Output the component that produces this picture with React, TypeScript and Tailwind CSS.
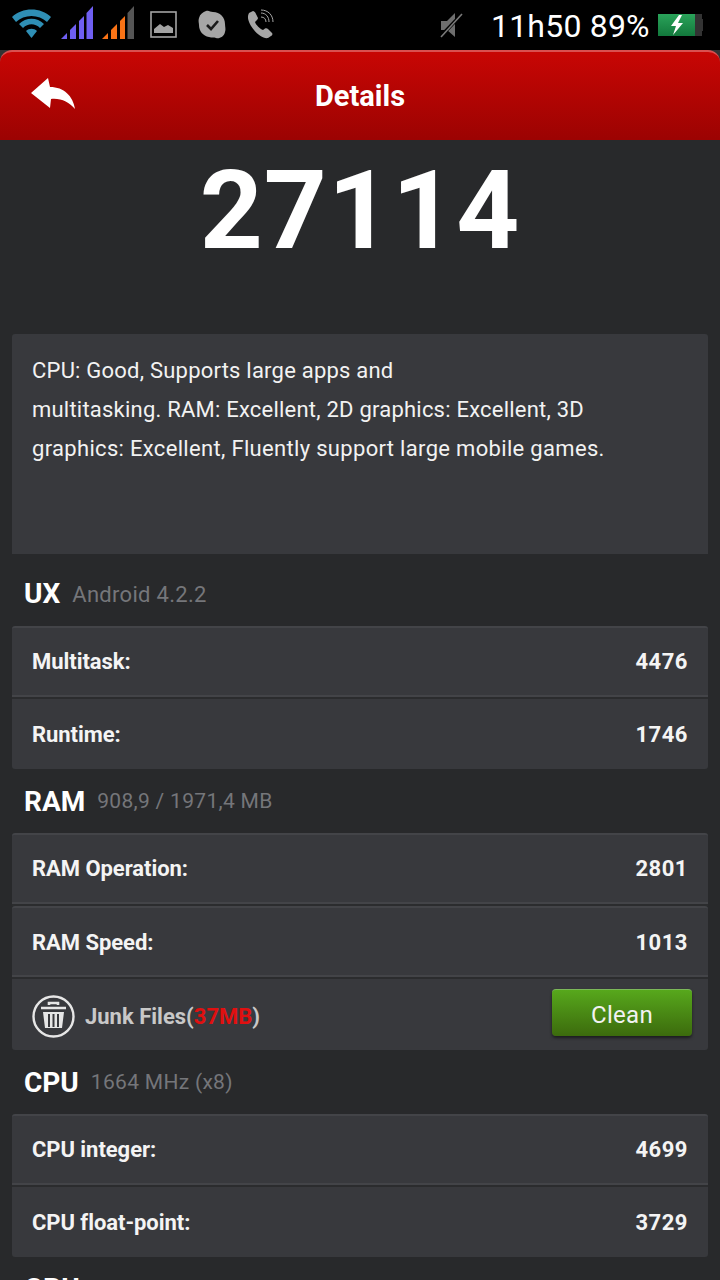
import React from 'react';

const FONT = "font-['Roboto',sans-serif]";

const WifiIcon = () => (
  <svg width="40" height="30" viewBox="0 0 40 30" className="absolute left-[12px] top-[8px]">
    <path d="M0 9 C10 -1 29 -1 39 9 L35 14 C27 6 12 6 4 14 Z" fill="#2f8fb5" />
    <path d="M7 16 C14 9 25 9 32 16 L28 20 C23 15 16 15 11 20 Z" fill="#2f8fb5" />
    <path d="M14 23 C17 20 22 20 25 23 L19.5 30 Z" fill="#2f8fb5" />
  </svg>
);

const SignalIcon = ({ color, last, left }: { color: string; last: string; left: string }) => (
  <svg width="32" height="33" viewBox="0 0 32 33" className={`absolute top-[6px] ${left}`}>
    <path d="M0 33 L6 27 V33 Z" fill={color} />
    <path d="M9 33 V24 L15 18 V33 Z" fill={color} />
    <path d="M18 33 V15 L23 10 V33 Z" fill={color} />
    <path d="M25.5 33 V7 L32 0 V33 Z" fill={last} />
  </svg>
);

const StatusBar = () => (
  <div className="relative h-[50px] bg-black shrink-0">
    <WifiIcon />
    <SignalIcon color="#6f5ff2" last="#6f5ff2" left="left-[61px]" />
    <SignalIcon color="#f97316" last="#555555" left="left-[102px]" />
    <svg width="28" height="28" viewBox="0 0 28 28" className="absolute left-[150px] top-[11px]">
      <rect x="1" y="1" width="25" height="25" fill="none" stroke="#a3a3a3" strokeWidth="1.6" />
      <path d="M4 22 V18 L10 13 L14 16 L18 14 L23 17 V22 Z" fill="#a3a3a3" />
    </svg>
    <svg width="30" height="30" viewBox="0 0 30 30" className="absolute left-[197px] top-[10px]">
      <path d="M9 1 C12 0 13 2 16 2 C23 2 28 7 28 14 C28 17 29 19 28 22 C27 27 22 29 19 28 C17 27 15 28 12 27 C6 26 2 21 2 15 C2 13 1 11 2 8 C3 4 6 2 9 1 Z" fill="#a6a6a6" />
      <path d="M10 15 L14 19 L21 11" fill="none" stroke="#1a1a1a" strokeWidth="2.6" />
    </svg>
    <svg width="28" height="30" viewBox="0 0 28 30" className="absolute left-[246px] top-[9px]">
      <path d="M3 4 L7 2 C8 2 9 3 9.5 4 L12 9 C12 10 11 11 10 12 L9 13 C10 16 14 20 17 21 L19 19.5 C20 19 21 19 22 20 L26 24 C27 25 26 27 25 27 L22 29 C18 30 12 26 8 21 C4 16 0 9 3 4 Z" fill="#a6a6a6" />
      <path d="M15 8 C18 8 20 10 20 13 M15 4 C20 4 23 8 23 13 M15 1 C22 1 27 6 27 13" fill="none" stroke="#a6a6a6" strokeWidth="1" />
    </svg>
    <svg width="26" height="28" viewBox="0 0 26 28" className="absolute left-[439px] top-[11px]">
      <path d="M2 10 H8 L16 2 V26 L8 19 H2 Z" fill="#6e6e6e" />
      <path d="M24 2 L1 26" stroke="#000000" strokeWidth="3.5" />
      <path d="M23 3 L2 26" stroke="#7a7a7a" strokeWidth="1.6" />
    </svg>
    <span className={`absolute left-[491px] top-[7px] text-[32px] leading-[38px] text-white tracking-[0.2px] whitespace-nowrap ${FONT}`}>
      11h50 89%
    </span>
    <div className="absolute left-[658px] top-[14px] flex items-center">
      <div className="w-[37px] h-[22px] flex items-center justify-center bg-gradient-to-b from-[#2aa35a] to-[#12793c]">
        <svg width="18" height="20" viewBox="0 0 18 20">
          <path d="M11 0 L3 11 H8 L5 20 L15 8 H10 L14 0 Z" fill="#ffffff" />
        </svg>
      </div>
      <div className="w-[7px] h-[22px] bg-[#333333]" />
      <div className="w-[1px] h-[12px] bg-[#333333]" />
    </div>
  </div>
);

const Header = () => (
  <div className="relative h-[90px] shrink-0 bg-[#333333]">
    <div className="h-full flex items-center justify-center pt-[1px] rounded-t-[12px] border-t-[2px] border-[#d95050] bg-gradient-to-b from-[#c80604] to-[#9c0302]">
      <span className={`text-[29px] font-bold text-white ${FONT}`}>Details</span>
    </div>
    <svg width="46" height="34" viewBox="0 0 46 34" className="absolute left-[31px] top-[28px]">
      <path d="M0 15 L17 0 L19 9 C33 9 42 18 44 31 C38 24 30 20 20 21 L19 30 Z" fill="#ffffff" />
    </svg>
  </div>
);

const Row = ({ label, value, pad = '' }: { label: string; value: string; pad?: string }) => (
  <div className={`h-[71px] flex items-center justify-between px-[20px] bg-[#38393d] border-t-[2px] border-[#434448] rounded-t-[3px] border-b-[2px] border-b-[#434448] ${pad}`}>
    <span className="text-[22px] font-bold text-[#f4f4f4] tracking-[-0.05px]">{label}</span>
    <span className="text-[22px] font-bold text-[#f4f4f4] tracking-[0.5px]">{value}</span>
  </div>
);

const LastRow = ({ label, value }: { label: string; value: string }) => (
  <div className="h-[70px] flex items-center justify-between px-[20px] pt-[1px] bg-[#38393d] rounded-b-[3px]">
    <span className="text-[22px] font-bold text-[#f4f4f4] tracking-[-0.05px]">{label}</span>
    <span className="text-[22px] font-bold text-[#f4f4f4] tracking-[0.5px]">{value}</span>
  </div>
);

const SectionTitle = ({ title, sub, className }: { title: string; sub: string; className: string }) => (
  <div className={`flex items-center gap-[12px] pl-[12px] ${className}`}>
    <span className="text-[28px] font-bold text-white">{title}</span>
    <span className="text-[#75767a] tracking-[0.3px]">{sub}</span>
  </div>
);

const App = () => (
  <div className={`w-[720px] h-[1280px] overflow-hidden flex flex-col bg-[#28292b] ${FONT}`}>
    <StatusBar />
    <Header />
    <div className="h-[194px] shrink-0 flex justify-center">
      <span className="text-[110px] leading-[142px] font-bold text-white tracking-[1px]">27114</span>
    </div>
    <div className="flex flex-col px-[12px]">
      <div className="h-[220px] pl-[20px] pr-[16px] pt-[17px] bg-[#38393d] rounded-t-[3px] text-[22px] leading-[39px] text-[#f2f2f2] tracking-[0.22px]">
        CPU: Good, Supports large apps and
        <br />
        multitasking. RAM: Excellent, 2D graphics: Excellent, 3D
        <br />
        <span className="tracking-[0.32px]">graphics: Excellent, Fluently support large mobile games.</span>
      </div>
      <SectionTitle title="UX" sub="Android 4.2.2" className="h-[72px] pt-[8px] text-[22px]" />
      <Row label="Multitask:" value="4476" />
      <div className="h-[2px] bg-[#2b2c2e]" />
      <LastRow label="Runtime:" value="1746" />
      <SectionTitle title="RAM" sub="908,9 / 1971,4 MB" className="h-[64px] pt-[1px] text-[21px]" />
      <Row label="RAM Operation:" value="2801" />
      <div className="h-[2px] bg-[#2b2c2e]" />
      <Row label="RAM Speed:" value="1013" pad="pt-[1px]" />
      <div className="h-[2px] bg-[#2b2c2e]" />
      <div className="h-[71px] flex items-center justify-between pl-[20px] pr-[16px] pb-[4px] bg-[#38393d] rounded-b-[3px]">
        <div className="flex items-center gap-[10px] pt-[8px]">
          <svg width="43" height="43" viewBox="0 0 43 43">
            <circle cx="21.5" cy="21.5" r="20" fill="none" stroke="#e6e6e6" strokeWidth="2.4" />
            <path d="M17 10 V8 H26 V10 M9 13 H34" fill="none" stroke="#e6e6e6" strokeWidth="2.6" />
            <path d="M11 17 H32 L30 33 H13 Z" fill="#e6e6e6" />
            <path d="M17 19 V32 M21.5 19 V32 M26 19 V32" stroke="#38393d" strokeWidth="2" />
          </svg>
          <span className="text-[22px] font-bold text-[#c8c8c8]">
            Junk Files(<span className="text-[#e01010]">37MB</span>)
          </span>
        </div>
        <div className="w-[140px] h-[47px] flex items-center justify-center pt-[3px] rounded-[4px] border-t border-[#7cb85a] bg-gradient-to-b from-[#57a81c] to-[#3c6b0d] shadow-[0_2px_3px_rgba(0,0,0,0.5)] text-[24px] text-[#f2f2f2] tracking-[0.3px]">
          Clean
        </div>
      </div>
      <SectionTitle title="CPU" sub="1664 MHz (x8)" className="h-[64px] pt-[1px] text-[21px]" />
      <Row label="CPU integer:" value="4699" />
      <div className="h-[2px] bg-[#2b2c2e]" />
      <LastRow label="CPU float-point:" value="3729" />
      <SectionTitle title="GPU" sub="" className="h-[64px] text-[21px]" />
    </div>
  </div>
);

export default App;
